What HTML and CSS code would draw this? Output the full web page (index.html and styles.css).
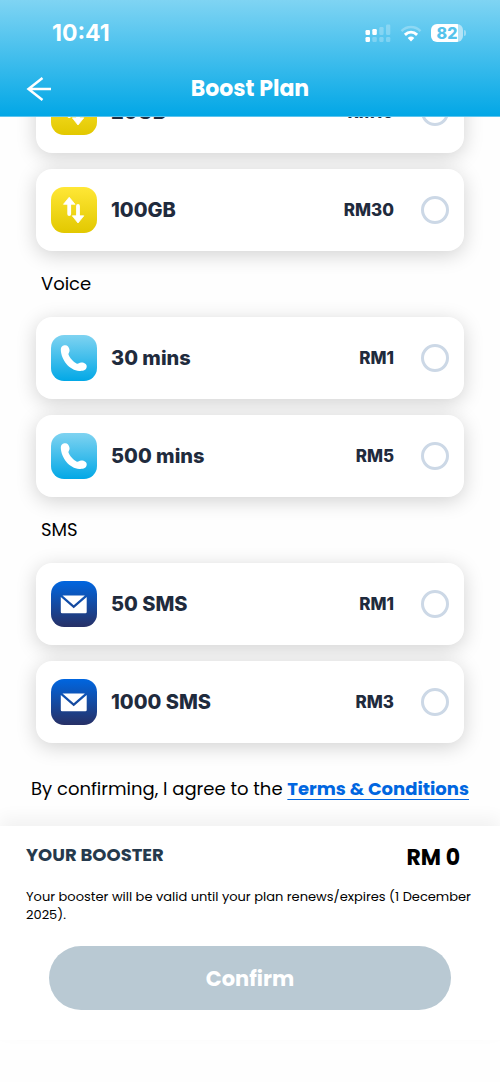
FILE: index.html
```html
<!DOCTYPE html>
<html lang="en">
<head>
<meta charset="utf-8">
<meta name="viewport" content="width=device-width, initial-scale=1">
<title>Boost Plan</title>
<link rel="stylesheet" href="styles.css">
</head>
<body>
<svg class="defs" width="0" height="0" aria-hidden="true">
  <symbol id="data" viewBox="0 0 46 46">
    <path d="M18.200 27V15M27 19V31" fill="none" stroke="#fff" stroke-width="3.800" stroke-linecap="round"/>
    <path d="M18.200 10.300 L24 17.300 H12.500Z M27 36 L32.800 28.800 H21.300Z" fill="#fff" stroke="#fff" stroke-width="0.800" stroke-linejoin="round"/>
  </symbol>
  <symbol id="phone" viewBox="0 0 46 46">
    <path d="M13.300 10.300C16 9.600 18 11.700 18.500 14.700C18.900 17.200 16.900 18.200 17.700 20.100C19 23.300 22.500 27 25.500 28.500C27.300 29.300 27.800 27.600 30.200 27.500C33.300 27.400 36 29 35.700 31.800C35.400 35.300 32 36.100 28.300 35.900C18.500 35.300 10.200 25 9.800 14.700C9.700 12.200 11.200 10.800 13.300 10.300Z" fill="#fff"/>
  </symbol>
  <symbol id="mail" viewBox="0 0 46 46">
    <path d="M11.500 14.500H33.900L22.700 24.300Z" fill="#fff"/>
    <path d="M9.800 16L22.700 27.300L35.700 16V31Q35.700 32.300 34.400 32.300H11.100Q9.800 32.300 9.800 31Z" fill="#fff"/>
  </symbol>
</svg>
<header class="header">
  <div class="status">
    <time class="clock">10:41</time>
    <div class="status-icons">
      <svg width="26" height="19" viewBox="0 0 26 19" fill="#fff" aria-hidden="true">
        <rect x="0.500" y="6" width="4.500" height="5" rx="1.200"/><rect x="7.300" y="5" width="4.500" height="6" rx="1.200"/>
        <rect x="0.500" y="13" width="4.500" height="5" rx="1.200"/>
        <g opacity=".25"><rect x="14.300" y="3" width="4.300" height="8" rx="1.200"/><rect x="21" y="0.500" width="4.300" height="10.500" rx="1.200"/><rect x="7.300" y="13" width="4.500" height="5" rx="1.200"/><rect x="14.300" y="13" width="4.300" height="5" rx="1.200"/><rect x="21" y="13" width="4.300" height="5" rx="1.200"/></g>
      </svg>
      <svg width="22" height="17" viewBox="0 0 22 17" fill="none" stroke="#fff" aria-hidden="true">
        <path d="M1.500 6.200C7 0.700 15 0.700 20.500 6.200" stroke-width="2.500" opacity=".28"/>
        <path d="M4.900 9.900C8.600 6.300 13.400 6.300 17.100 9.900" stroke-width="2.900"/>
        <path d="M7.700 12.900Q11 10 14.300 12.900L11 16.500Z" fill="#fff" stroke="none"/>
      </svg>
      <div class="battery"><span class="level">82</span></div>
    </div>
  </div>
  <div class="nav">
    <button class="back" type="button" aria-label="Back">
      <svg width="26" height="26" viewBox="0 0 26 26" fill="none" stroke="#fff" stroke-width="2.500" aria-hidden="true"><path d="M25 13H2M16.500 2L2.500 13L16.500 24"/></svg>
    </button>
    <h1 class="title">Boost Plan</h1>
  </div>
</header>
<main class="main">
  <div class="cards">
    <label class="card"><span class="icon icon-data"><svg><use href="#data"/></svg></span><span class="name">20GB</span><span class="price">RM10</span><input class="radio" type="radio" name="plan"></label>
    <label class="card"><span class="icon icon-data"><svg><use href="#data"/></svg></span><span class="name">100GB</span><span class="price">RM30</span><input class="radio" type="radio" name="plan"></label>
  </div>
  <h2 class="group">Voice</h2>
  <div class="cards">
    <label class="card"><span class="icon icon-voice"><svg><use href="#phone"/></svg></span><span class="name">30 mins</span><span class="price">RM1</span><input class="radio" type="radio" name="plan"></label>
    <label class="card"><span class="icon icon-voice"><svg><use href="#phone"/></svg></span><span class="name">500 mins</span><span class="price">RM5</span><input class="radio" type="radio" name="plan"></label>
  </div>
  <h2 class="group">SMS</h2>
  <div class="cards">
    <label class="card"><span class="icon icon-sms"><svg><use href="#mail"/></svg></span><span class="name">50 SMS</span><span class="price">RM1</span><input class="radio" type="radio" name="plan"></label>
    <label class="card"><span class="icon icon-sms"><svg><use href="#mail"/></svg></span><span class="name">1000 SMS</span><span class="price">RM3</span><input class="radio" type="radio" name="plan"></label>
  </div>
  <p class="terms">By confirming, I agree to the <a class="link" href="#terms">Terms &amp; Conditions</a></p>
</main>
<footer class="footer">
  <div class="summary">
    <h2 class="label">YOUR BOOSTER</h2>
    <strong class="total">RM 0</strong>
  </div>
  <p class="note">Your booster will be valid until your plan renews/expires (1 December 2025).</p>
  <button class="confirm" type="button">Confirm</button>
</footer>
</body>
</html>
```
FILE: styles.css
```css
* {
  box-sizing: border-box;
}
body {
  margin: 0;
  height: 100vh;
  padding-bottom: 42px;
  display: flex;
  flex-direction: column;
  background: #fefefe;
  color: #000;
  font-family: Poppins, Inter, sans-serif;
}
h1, h2, p {
  margin: 0;
}
button {
  border: 0;
  padding: 0;
  font: inherit;
}
.defs {
  position: absolute;
}
.header {
  position: relative;
  z-index: 1;
  flex: none;
  padding-top: 18px;
  color: #fff;
  background: linear-gradient(#7fd4f3, #02a7e6);
  border-bottom: 1px solid #5cc4ee;
}
.status {
  display: flex;
  align-items: center;
  justify-content: space-between;
  height: 30px;
  padding: 0 37px 0 52px;
}
.clock {
  font: 700 23px/30px Inter, sans-serif;
}
.status-icons {
  display: flex;
  align-items: center;
  gap: 9px;
}
.battery {
  position: relative;
  width: 32px;
  height: 18px;
  border-radius: 6px;
  background: linear-gradient(to right, #fff 27px, #b3e3f6 27px);
}
.battery::after {
  content: "";
  position: absolute;
  right: -3px;
  top: 6px;
  width: 2px;
  height: 6px;
  border-radius: 0 2px 2px 0;
  background: #9edcf4;
}
.level {
  display: block;
  text-align: center;
  font: 800 16px/18px Inter, sans-serif;
  color: #55c3ec;
}
.nav {
  display: grid;
  grid-template-columns: 26px 1fr 26px;
  align-items: center;
  height: 68px;
  padding: 13px 26px 0;
}
.back {
  display: flex;
  background: none;
}
.title {
  text-align: center;
  font-size: 22px;
  font-weight: 700;
  line-height: 30px;
}
.main {
  flex: 1;
  min-height: 0;
  overflow: hidden;
  display: flex;
  flex-direction: column;
  justify-content: flex-end;
  padding: 0 36px;
}
.main > * {
  flex: none;
}
.cards {
  display: grid;
  gap: 16px;
}
.card {
  display: flex;
  align-items: center;
  padding: 18px 15px;
  border-radius: 16px;
  background: #fff;
  color: #1f2b3d;
  box-shadow: 0 4px 20px rgba(0, 0, 0, 0.18);
}
.icon {
  width: 46px;
  height: 46px;
  margin-right: 14px;
  border-radius: 13px;
}
.icon svg {
  display: block;
  width: 46px;
  height: 46px;
}
.icon-data {
  background: linear-gradient(#ffe736, #e2c800);
}
.icon-voice {
  background: linear-gradient(#7fd3f1, #02a8e6);
}
.icon-sms {
  background: linear-gradient(#0066e0, #273066);
}
.name {
  flex: 1;
  font: 800 20px/28px Inter, sans-serif;
}
.price {
  font: 800 17px/28px Inter, sans-serif;
}
.radio {
  appearance: none;
  width: 28px;
  height: 28px;
  margin: 0 0 0 27px;
  border: 3px solid #ccd8e6;
  border-radius: 50%;
}
.radio:checked {
  border-width: 8px;
  border-color: #0066e0;
}
.group {
  padding: 19px 5px;
  font-size: 18px;
  font-weight: 400;
  line-height: 28px;
}
.terms {
  margin: 0 -16px;
  padding: 32px 0 23px;
  text-align: center;
  font-size: 18px;
  line-height: 28px;
}
.link {
  color: #0066e0;
  font-weight: 700;
  text-decoration-thickness: 1px;
  text-underline-offset: 4px;
}
.footer {
  position: relative;
  flex: none;
  padding: 16px 26px 30px;
  background: #fff;
  box-shadow: 0 -8px 16px rgba(0, 0, 0, 0.05);
}
.summary {
  display: flex;
  justify-content: space-between;
  padding-right: 14px;
}
.label {
  font-size: 18px;
  font-weight: 700;
  line-height: 26px;
  color: #263a4d;
}
.total {
  font-size: 22px;
  line-height: 32px;
}
.note {
  margin-top: 14px;
  font-size: 13px;
  line-height: 18px;
}
.confirm {
  display: block;
  width: calc(100% - 46px);
  height: 64px;
  margin: 22px auto 0;
  border-radius: 32px;
  background: #b9c9d3;
  color: #fff;
  font-size: 21px;
  font-weight: 700;
}
```
